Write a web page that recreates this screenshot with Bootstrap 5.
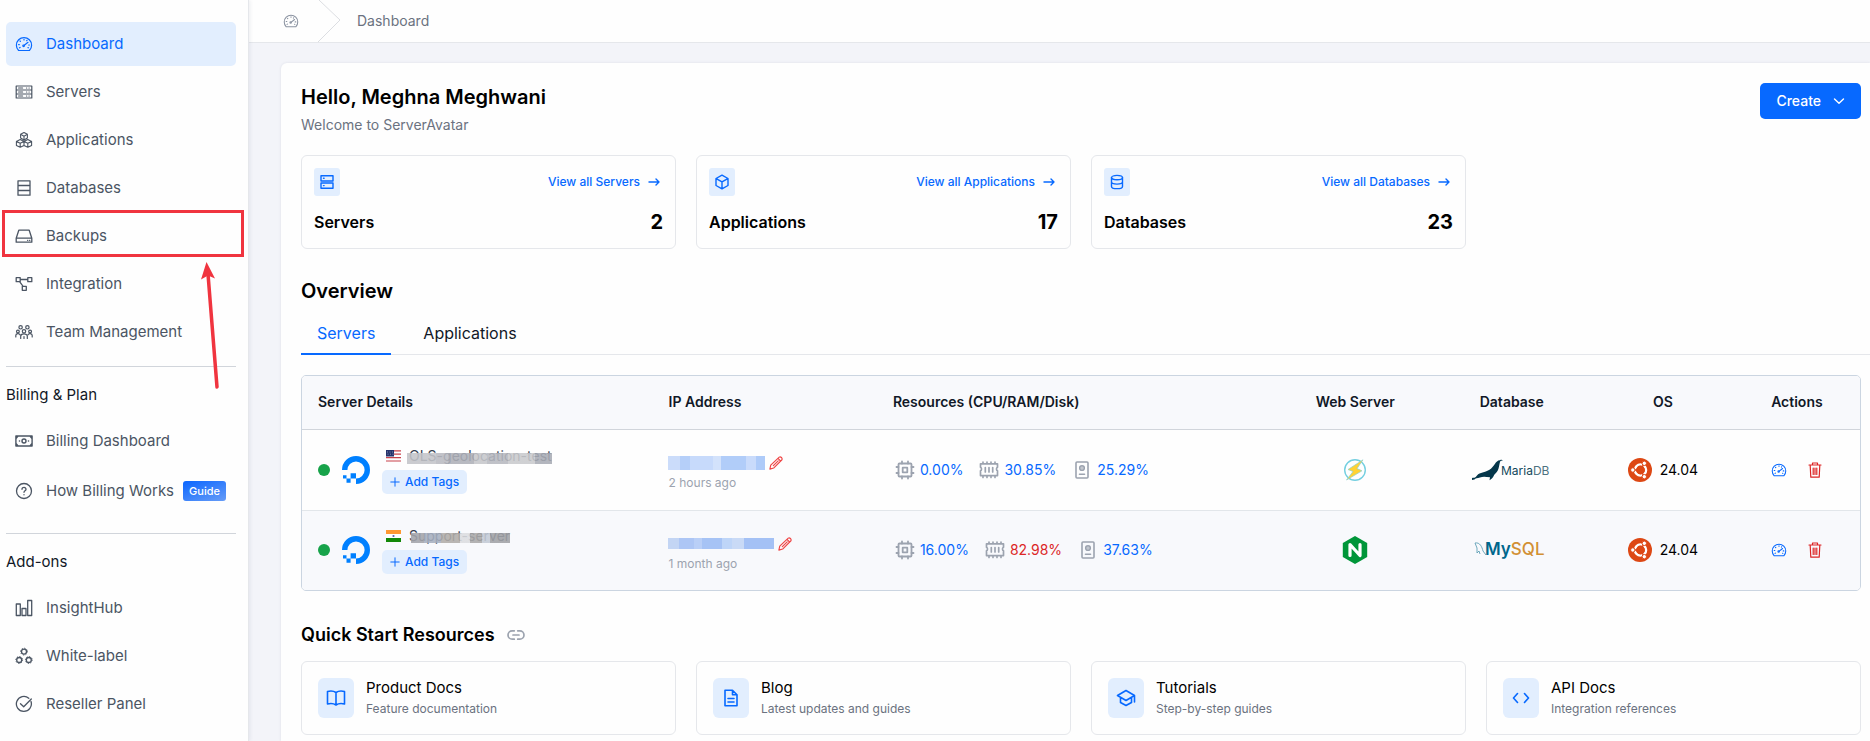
<!DOCTYPE html>
<html lang="en">
<head>
<meta charset="utf-8">
<meta name="viewport" content="width=device-width, initial-scale=1">
<title>ServerAvatar - Dashboard</title>
<link rel="stylesheet" href="https://cdn.jsdelivr.net/npm/bootstrap@5.3.0/dist/css/bootstrap.min.css">
<style>
:root{--sa-blue:#0769ff;--sa-tint:#e2eefe;--sa-line:#e5e7eb;--sa-slate:#4b5563;--sa-gray:#6b7280}
body{font-family:Inter,"Liberation Sans",sans-serif;font-size:14px;line-height:20px;color:#000;background:#f3f4f9}
a{text-decoration:none;color:var(--sa-blue)}
svg{display:block;flex:none}
.ln{fill:none;stroke:currentColor;stroke-linecap:round;stroke-linejoin:round}
.s14{width:14px;height:14px}
.s16{width:16px;height:16px}
.s18{width:18px;height:18px}
.s20{width:20px;height:20px}

.side{width:249px;flex:none;background:#fefefe;border-right:1px solid var(--sa-line);box-shadow:1px 0 4px rgba(30,40,80,.08);padding:22px 12px 0 6px;position:relative}
.side .nav-link{height:44px;margin-bottom:4px;padding:0 8px 0 9px;gap:13px;display:flex;align-items:center;color:var(--sa-slate);font-size:15px;border-radius:5px;white-space:nowrap}
.side .nav-link svg{width:18px;height:18px}
.side .nav-link.active{background:var(--sa-tint);color:var(--sa-blue)}
.side .nav-link.guide{height:48px}
.side hr{margin:8px 0 16px;border-color:#d1d5db;opacity:1}
.side hr.later{margin-top:14px}
.side h2{font-size:15px;line-height:24px;font-weight:400;margin:0 0 12px;color:#111827}
.guide-tag{font-size:11px;line-height:20px;font-weight:500;color:#fff;background:linear-gradient(160deg,#0b66ff,#669cf7);border-radius:3px;padding:0 6px;margin-left:-4px}
.callout-box{position:absolute;left:2px;top:210px;width:242px;height:47px;border:3px solid #f0343f;pointer-events:none}
.callout-arrow{position:absolute;left:200px;top:262px;pointer-events:none}

.crumbs{height:43px;background:#fefefe;border-bottom:1px solid var(--sa-line);color:var(--sa-gray);font-size:14px}
.crumbs a{color:#8b93a1;padding:0 18px 0 34px}
.crumbs .sep{width:24px;height:42px;margin-right:16px}

.panel{background:#fefefe;margin:20px 0 0 32px;padding:20px 9px 4px 20px;border-top-left-radius:6px;box-shadow:0 0 3px rgba(30,40,80,.1)}
h1,.h-over{font-size:20px;line-height:28px;font-weight:600;margin:0}
.muted{color:var(--sa-gray)}
.btn-create{background:var(--sa-blue);border:0;color:#fff;font-size:14px;font-weight:500;height:36px;padding:0 16px;border-radius:5px;display:flex;align-items:center;gap:12px}
.btn-create:hover{background:#055be0;color:#fff}
.tiles{display:grid;grid-template-columns:repeat(4,minmax(0,1fr));gap:20px}
.tile{border:1px solid var(--sa-line);border-radius:6px;background:#fefefe}
.stat{height:94px;padding:12px}
.stat .ico{width:26px;height:28px;border-radius:3px}
.ico{background:var(--sa-tint);color:var(--sa-blue);display:flex;align-items:center;justify-content:center;flex:none}
.stat .more{font-size:12px;font-weight:500;gap:8px;padding-right:3px}
.stat .name{font-size:16px;font-weight:600}
.stat .num{font-size:20px;font-weight:700}

.tabs{border-bottom:1px solid var(--sa-line);gap:16px;margin-right:-9px}
.tabs .nav-link{color:#111827;font-size:16px;font-weight:400;line-height:24px;padding:8px 16px 8px;border-bottom:2px solid transparent;margin-bottom:-1px}
.tabs .nav-link.active{color:var(--sa-blue);border-color:var(--sa-blue)}

.grid-wrap{border:1px solid #cbd5e1;border-radius:5px;overflow:hidden;margin:20px 0 26px}
.servers{width:100%;table-layout:fixed;border-collapse:collapse}
.servers th{height:53px;font-size:14px;font-weight:600;color:#111827;background:#f8f9fc;border-bottom:1px solid #d1d5db;padding:0 16px}
.servers td{height:81px;padding:0 16px}
.servers tbody tr+tr td{height:80px;background:#f8f9fc;border-top:1px solid #e2e6ea}
.servers .mid{text-align:center;padding:0}
.dot{width:12px;height:12px;border-radius:50%;background:#17a34a;flex:none}
.srv{color:#374151;position:relative;line-height:20px;font-size:14px;white-space:nowrap}
.veil{position:absolute;left:-2px;right:0;top:7px;height:11px}
.veil.one{background:linear-gradient(90deg,#c3c4c9 0 20%,#b9bac1 20% 28%,#aeb0b8 28% 46%,#c6c7cb 46% 55%,#b7b9c0 55% 70%,#c9cacd 70% 88%,#a9acb5 88%);opacity:.88}
.veil.two{left:2px;height:10px;background:linear-gradient(90deg,#a3a4aa 0 13%,#a6afbf 13% 30%,#b1ada9 30% 50%,#dcdde0 50% 60%,#aaa9a9 60% 72%,#c4cbd6 72% 80%,#a1a2a6 80%);opacity:.88}
.addtag{background:var(--sa-tint);color:var(--sa-blue);border:0;border-radius:5px;height:24px;font-size:12px;font-weight:500;padding:0 8px;display:flex;align-items:center;gap:5px}
.ipcell{padding-top:10px}
.ip{display:block;width:97px;height:14px;margin-left:-1px;background:linear-gradient(90deg,#cbdcfa 0 12%,#b5cff9 12% 23%,#c7dafb 23% 46%,#d3e2fb 46% 55%,#b1cdf9 55% 80%,#c9dbfb 80% 91%,#aecbf9 91%)}
.ip.second{width:106px;height:11px;background:linear-gradient(90deg,#c3d5f4 0 10%,#adc6f5 10% 25%,#b9cff7 25% 32%,#a6c3f5 32% 51%,#bed5f8 51% 60%,#c9daf6 60% 72%,#a4c1f5 72%)}
.iconbtn{background:none;border:0;padding:0;display:block}
.iconbtn.edit{color:#ef4444}
.iconbtn.open{color:var(--sa-blue)}
.ago{font-size:12px;color:#9ca3af;margin-top:3px}
.metrics{padding-left:2px}
.metric{gap:5px;color:var(--sa-blue)}
.metric svg{color:#9ca3af;width:20px;height:20px}
.os{font-size:14px;font-weight:400}
.red{color:#dc2626}
.h-quick{font-size:18px;line-height:28px;font-weight:600;margin:0}
.quick{height:74px;padding:0 16px;gap:12px;color:#000}
.quick .ico{width:36px;height:40px;border-radius:6px}
.quick .ttl{font-size:15px;line-height:22px}
.quick .sub{font-size:12px;line-height:20px;color:var(--sa-gray)}
</style>
</head>
<body>
<svg width="0" height="0" class="position-absolute" aria-hidden="true">
<symbol id="gauge" viewBox="0 0 18 18"><g class="ln" stroke-width="1.2"><path d="M3.600 15.500a7.600 7.600 0 1 1 10.800 0z"/><path d="M9.300 10.300l3.700-3M9 4.300v.6M5 6l.4.4M3.600 9.600h.7M13.700 10h.7M4.500 12.800l.6-.3M13 12.600l.4.2M12 5.300l-.3.4"/><circle cx="8.600" cy="10.800" r=".8"/></g></symbol>
<symbol id="rack" viewBox="0 0 18 18"><g class="ln" stroke-width="1.200"><path d="M1.200 3h15.600v12H1.200zM1.200 7h15.600M1.200 11h15.600M3.600 5h4M3.600 9h4M3.600 13h4M11.500 5h.2M14 5h.2M11.500 9h.2M14 9h.2M11.500 13h.2M14 13h.2"/></g></symbol>
<symbol id="cubes" viewBox="0 0 18 18"><g class="ln" stroke-width="1.1"><path d="M9 1.5l3.400 1.800v3.800L9 9 5.600 7.100V3.300zM5.600 3.300L9 5.200l3.400-1.900M9 5.200V9M5.200 8.500L9 10.400v4L5.200 16.300 1.400 14.400v-4zM1.400 10.400l3.800 1.900L9 10.400M5.200 12.300v4M12.800 8.500l3.800 1.900v4l-3.800 1.900L9 14.400M9 10.400l3.800-1.900M9 10.400l3.800 1.900 3.800-1.900M12.800 12.300v4"/></g></symbol>
<symbol id="shelf" viewBox="0 0 18 18"><path class="ln" stroke-width="1.3" d="M3 1.800h12v14.400H3zM3 6.500h12M3 11.500h12"/></symbol>
<symbol id="drive" viewBox="0 0 18 18"><path class="ln" stroke-width="1.3" d="M3.800 3.200h10.400l2.600 8v4H1.200v-4zM1.200 11.200h15.600M12.600 13.300h.2M14.600 13.300h.2"/></symbol>
<symbol id="flow" viewBox="0 0 18 18"><path class="ln" stroke-width="1.300" d="M1.200 2.700h4v4h-4zM12.800 2.700h4v4h-4zM7.300 11.300h4v4h-4zM5.200 4.500h7.600M4.600 6.700l3.500 4.600"/></symbol>
<symbol id="team" viewBox="0 0 18 18"><g class="ln" stroke-width="1.200"><circle cx="5.600" cy="4.300" r="1.700"/><circle cx="12.400" cy="4.300" r="1.700"/><circle cx="9" cy="8.300" r="1.700"/><circle cx="2.900" cy="8.500" r="1.400"/><circle cx="15.100" cy="8.500" r="1.400"/><path d="M.8 14v-1.500c0-2 3.400-2.600 4.200-.7M17.200 14v-1.500c0-2-3.400-2.600-4.200-.7M5.700 15.500v-2.300c0-3.200 6.600-3.200 6.600 0v2.300M9 13.500v2"/></g></symbol>
<symbol id="cash" viewBox="0 0 18 18"><g class="ln" stroke-width="1.400"><path d="M.9 4h16.200v10H.9zM4.400 9h.2M13.400 9h.2M1 6.500L3 4M15 4l2 2.500M1 11.500L3 14M17 11.500L15 14"/><circle cx="9" cy="9" r="2"/></g></symbol>
<symbol id="help" viewBox="0 0 18 18"><g class="ln" stroke-width="1.300"><circle cx="9" cy="9" r="7.500"/><path d="M7 7.300C7 4.700 11.200 4.800 11 7.400c-.1 1.400-2 1.400-2 2.900M9 12.600v.2"/></g></symbol>
<symbol id="bars" viewBox="0 0 18 18"><path class="ln" stroke-width="1.300" d="M1.300 5h4v11.500h-4zM7 9.500h4v7H7zM12.700 1.500h4v15h-4z"/></symbol>
<symbol id="rings" viewBox="0 0 18 18"><g class="ln" stroke-width="1.300"><circle cx="9" cy="4.600" r="2.500"/><circle cx="4.200" cy="13" r="2.500"/><circle cx="13.800" cy="13" r="2.500"/></g><g class="ln" stroke-width="1" stroke-dasharray=".5 2.200"><circle cx="9" cy="4.600" r="3.400"/><circle cx="4.200" cy="13" r="3.400"/><circle cx="13.800" cy="13" r="3.400"/></g></symbol>
<symbol id="okring" viewBox="0 0 18 18"><path class="ln" stroke-width="1.300" d="M16 6.500A7.500 7.500 0 1 1 13.800 3.200M5.500 8.700l3.200 3L16.300 4"/></symbol>
<symbol id="srv2" viewBox="0 0 16 16"><path class="ln" stroke-width="1.400" d="M2 1.700h12v5.300H2zM2 9h12v5.300H2zM4.500 4.300h.6M4.500 11.600h.6"/></symbol>
<symbol id="cube" viewBox="0 0 16 16"><path class="ln" stroke-width="1.400" d="M8 1.200l6 3.300v7L8 14.800l-6-3.300v-7zM2.200 4.600L8 7.800l5.800-3.200M8 7.800v7"/></symbol>
<symbol id="cyl" viewBox="0 0 16 16"><g class="ln" stroke-width="1.400"><ellipse cx="8" cy="3.600" rx="5.500" ry="2.200"/><path d="M2.500 3.600v8.800c0 3 11 3 11 0V3.600M2.500 8c0 2.800 11 2.800 11 0"/></g></symbol>
<symbol id="arrow" viewBox="0 0 12 12"><path class="ln" stroke-width="1.400" d="M1 6h10M8 3l3 3-3 3"/></symbol>
<symbol id="ocean" viewBox="0 0 28 28"><path fill="#0080ff" d="M14 28v-5.400a8.600 8.600 0 1 0-8.600-8.600H0A14 14 0 1 1 14 28z"/><path fill="#0080ff" d="M8.600 17.200H14v5.400H8.600zM4.500 22.600h4.100v4.100H4.500zM1 19.200h3.500v3.400H1z"/></symbol>
<symbol id="pencil" viewBox="0 0 16 16"><path class="ln" stroke-width="1.300" d="M1 15l1-4.500L11.700 1.300q1.300-.8 2.500.4t.6 2.600L5.300 13.800zM10.300 2.800l2.900 2.900M5 11l5.500-5.500"/></symbol>
<symbol id="cpu" viewBox="0 0 20 20"><g class="ln" stroke-width="1.800"><rect x="3.500" y="3.500" width="13" height="13" rx="1"/><rect x="7.700" y="7.700" width="4.600" height="4.600"/><path d="M7 3.500v-2M13 3.500v-2M7 18.500v-2M13 18.500v-2M3.500 7h-2M3.500 13h-2M18.500 7h-2M18.500 13h-2"/></g></symbol>
<symbol id="ram" viewBox="0 0 20 20"><path class="ln" stroke-width="1.700" d="M1.500 3.800h17v3.400q-1 .4-1 1.800t1 1.800v4.800h-17v-4.800q1-.4 1-1.800t-1-1.800zM6.300 7.500v4.500M10 7.500v4.500M13.700 7.500v4.500M4 3.500V2M8 3.500V2M12 3.500V2M16 3.500V2M4 17.500v-1.500M8 17.500v-1.500M12 17.500v-1.500M16 17.500v-1.500"/></symbol>
<symbol id="disk" viewBox="0 0 20 20"><g class="ln" stroke-width="1.600"><rect x="4" y="2" width="12" height="16" rx="1"/><circle cx="10" cy="8" r="2.300"/><path d="M7.500 14.300h5"/></g><circle cx="10" cy="8" r="1.800" fill="currentColor" opacity=".6"/></symbol>
<symbol id="trash" viewBox="0 0 16 16"><path class="ln" stroke-width="1.200" d="M2 3h12M5.500 2.800V1h5v1.800M3.200 3.200l.6 12h8.400l.6-12M6.200 6v6.500M8 6v6.500M9.800 6v6.500"/></symbol>
<symbol id="ubuntu" viewBox="0 0 24 24"><circle cx="12" cy="12" r="12" fill="#dd4814"/><circle cx="12.500" cy="12" r="5.600" fill="none" stroke="#fff" stroke-width="2.400"/><path stroke="#dd4814" stroke-width="1.400" d="M12.500 12H3M12.500 12l4.700 8.300M12.500 12l4.700-8.300"/><circle cx="12.500" cy="12" r="4.300" fill="#dd4814"/><g fill="#fff" stroke="#dd4814"><circle cx="4.800" cy="12" r="2.200"/><circle cx="16.300" cy="5.300" r="2.200"/><circle cx="16.300" cy="18.700" r="2.200"/></g></symbol>
</svg>

<div class="d-flex min-vh-100">
<aside class="side">
  <nav class="nav flex-column flex-nowrap" aria-label="Main">
    <a class="nav-link active" href="#"><svg><use href="#gauge"/></svg>Dashboard</a>
    <a class="nav-link" href="#"><svg><use href="#rack"/></svg>Servers</a>
    <a class="nav-link" href="#"><svg><use href="#cubes"/></svg>Applications</a>
    <a class="nav-link" href="#"><svg><use href="#shelf"/></svg>Databases</a>
    <a class="nav-link" href="#"><svg><use href="#drive"/></svg>Backups</a>
    <a class="nav-link" href="#"><svg><use href="#flow"/></svg>Integration</a>
    <a class="nav-link" href="#"><svg><use href="#team"/></svg>Team Management</a>
  </nav>
  <hr>
  <h2>Billing &amp; Plan</h2>
  <nav class="nav flex-column" aria-label="Billing">
    <a class="nav-link" href="#"><svg><use href="#cash"/></svg>Billing Dashboard</a>
    <a class="nav-link guide" href="#"><svg><use href="#help"/></svg>How Billing Works<span class="guide-tag">Guide</span></a>
  </nav>
  <hr class="later">
  <h2>Add-ons</h2>
  <nav class="nav flex-column" aria-label="Add-ons">
    <a class="nav-link" href="#"><svg><use href="#bars"/></svg>InsightHub</a>
    <a class="nav-link" href="#"><svg><use href="#rings"/></svg>White-label</a>
    <a class="nav-link mb-0" href="#"><svg><use href="#okring"/></svg>Reseller Panel</a>
  </nav>
  <div class="callout-box"></div>
  <svg class="callout-arrow" width="24" height="130" viewBox="0 0 24 130"><path d="M17 125L8 12" stroke="#f0343f" stroke-width="3.500" stroke-linecap="round"/><path d="M6.500 0L15 16.500 8 13.500 1 17.500z" fill="#f0343f"/></svg>
</aside>

<div class="flex-grow-1 d-flex flex-column overflow-hidden">
  <nav class="crumbs d-flex align-items-center" aria-label="Breadcrumb">
    <a href="#" aria-label="Home"><svg class="s16"><use href="#gauge"/></svg></a>
    <svg class="sep" viewBox="0 0 24 42"><path d="M2 0l21 20L1 42" fill="none" stroke="#dcdee2"/></svg>
    <span>Dashboard</span>
  </nav>

  <main class="panel flex-grow-1">
    <div class="d-flex justify-content-between align-items-start">
      <div>
        <h1>Hello, Meghna Meghwani</h1>
        <div class="muted mt-1">Welcome to ServerAvatar</div>
      </div>
      <button class="btn-create" type="button">Create <svg width="12" height="12" viewBox="0 0 12 12"><path class="ln" stroke-width="1.400" d="M1.500 4L6 8.300 10.500 4"/></svg></button>
    </div>

    <div class="tiles mt-3 pt-1">
      <div class="tile stat d-flex flex-column justify-content-between">
        <div class="d-flex justify-content-between align-items-center"><span class="ico"><svg class="s16"><use href="#srv2"/></svg></span><a class="more d-flex align-items-center" href="#">View all Servers <svg width="12" height="12"><use href="#arrow"/></svg></a></div>
        <div class="d-flex justify-content-between align-items-center pb-1"><span class="name">Servers</span><span class="num">2</span></div>
      </div>
      <div class="tile stat d-flex flex-column justify-content-between">
        <div class="d-flex justify-content-between align-items-center"><span class="ico"><svg class="s16"><use href="#cube"/></svg></span><a class="more d-flex align-items-center" href="#">View all Applications <svg width="12" height="12"><use href="#arrow"/></svg></a></div>
        <div class="d-flex justify-content-between align-items-center pb-1"><span class="name">Applications</span><span class="num">17</span></div>
      </div>
      <div class="tile stat d-flex flex-column justify-content-between">
        <div class="d-flex justify-content-between align-items-center"><span class="ico"><svg class="s16"><use href="#cyl"/></svg></span><a class="more d-flex align-items-center" href="#">View all Databases <svg width="12" height="12"><use href="#arrow"/></svg></a></div>
        <div class="d-flex justify-content-between align-items-center pb-1"><span class="name">Databases</span><span class="num">23</span></div>
      </div>
    </div>

    <h2 class="h-over mt-4 pt-1">Overview</h2>
    <nav class="nav tabs mt-1 pt-1" aria-label="Overview">
      <a class="nav-link active" href="#">Servers</a>
      <a class="nav-link" href="#">Applications</a>
    </nav>

    <div class="grid-wrap">
      <table class="servers">
        <colgroup><col style="width:22.5%"><col style="width:14.4%"><col style="width:25.8%"><col style="width:9.8%"><col style="width:10.3%"><col style="width:9.1%"><col style="width:8.1%"></colgroup>
        <thead><tr><th>Server Details</th><th>IP Address</th><th>Resources (CPU/RAM/Disk)</th><th class="mid">Web Server</th><th class="mid">Database</th><th class="mid">OS</th><th class="mid">Actions</th></tr></thead>
        <tbody>
        <tr>
          <td><div class="d-flex align-items-center gap-2">
            <span class="dot me-1"></span>
            <svg width="28" height="28" class="me-1"><use href="#ocean"/></svg>
            <div>
              <div class="d-flex align-items-center mb-1 ms-1 gap-2">
                <svg width="15" height="12" viewBox="0 0 15 12"><path fill="#fff" d="M0 0h15v12H0z"/><path stroke="#c8414b" stroke-width="1.200" d="M0 .8h15M0 4.200h15M0 7.600h15M0 11h15"/><path fill="#26336b" d="M0 0h8v6.500H0z"/><path stroke="#a9b2d0" stroke-dasharray="1 1.500" stroke-width=".7" d="M1 2h6M1.500 4.200h6"/></svg>
                <span class="srv">OLS-geolocation-test<span class="veil one"></span></span>
              </div>
              <button class="addtag" type="button"><svg width="10" height="10" viewBox="0 0 10 10"><path class="ln" d="M5 .8v8.400M.8 5h8.400"/></svg>Add Tags</button>
            </div></div></td>
          <td><div class="ipcell"><div class="d-flex align-items-center gap-1"><span class="ip"></span><button class="iconbtn edit" type="button" aria-label="Edit IP"><svg class="s14"><use href="#pencil"/></svg></button></div><div class="ago">2 hours ago</div></div></td>
          <td><div class="metrics d-flex gap-3"><span class="metric d-flex"><svg><use href="#cpu"/></svg>0.00%</span><span class="metric d-flex"><svg><use href="#ram"/></svg>30.85%</span><span class="metric d-flex"><svg><use href="#disk"/></svg>25.29%</span></div></td>
          <td class="mid"><svg width="24" height="24" viewBox="0 0 24 24" class="mx-auto"><circle cx="12" cy="12" r="10.300" fill="none" stroke="#73cfe0" stroke-width="1.400"/><path fill="#ffd234" stroke="#8ad0cf" stroke-width=".7" d="M20 1.800L5 11.500l5 2L3.500 22 19 12.800l-5-2.200z"/></svg></td>
          <td class="mid"><svg width="84" height="24" viewBox="0 0 84 24" class="mx-auto" role="img"><path fill="#04364a" d="M2 20c3-.5 3 .2 5-2.500 3-3.500 8-3 12-5.500C25 8.500 25 2.500 30 2.200c1-.6 2-.6 3 .1l-2.500.8c-.8 1.200-1 3.500-1.500 5.500-.6 3-1.500 5.500-4.500 8-1 1.500-1.500 3.800-5 5.600l.5-3c-4-.3-7-1-10 .3-2.500.8-5 .6-5.500 2L2 22z"/><text x="31" y="17" fill="#12485b" font-family="Inter" font-size="12">Maria<tspan fill="#4d7280">DB</tspan></text></svg></td>
          <td class="mid"><div class="d-flex justify-content-center align-items-center gap-2 os"><svg width="24" height="24"><use href="#ubuntu"/></svg>24.04</div></td>
          <td class="mid"><div class="d-flex justify-content-center gap-3"><button class="iconbtn open me-1" type="button" aria-label="Server dashboard"><svg class="s16"><use href="#gauge"/></svg></button><button class="iconbtn red" type="button" aria-label="Delete server"><svg class="s16"><use href="#trash"/></svg></button></div></td>
        </tr>
        <tr>
          <td><div class="d-flex align-items-center gap-2">
            <span class="dot me-1"></span>
            <svg width="28" height="28" class="me-1"><use href="#ocean"/></svg>
            <div>
              <div class="d-flex align-items-center mb-1 ms-1 gap-2">
                <svg width="15" height="12" viewBox="0 0 15 12"><path fill="#fff" d="M0 0h15v12H0z"/><path fill="#ff9933" d="M0 0h15v4H0z"/><path fill="#138808" d="M0 8h15v4H0z"/><circle cx="7.500" cy="6" r="1.100" fill="#5a62a8"/></svg>
                <span class="srv">Support-server<span class="veil two"></span></span>
              </div>
              <button class="addtag" type="button"><svg width="10" height="10" viewBox="0 0 10 10"><path class="ln" d="M5 .8v8.400M.8 5h8.400"/></svg>Add Tags</button>
            </div></div></td>
          <td><div class="ipcell"><div class="d-flex align-items-center gap-1"><span class="ip second"></span><button class="iconbtn edit" type="button" aria-label="Edit IP"><svg class="s14"><use href="#pencil"/></svg></button></div><div class="ago">1 month ago</div></div></td>
          <td><div class="metrics d-flex gap-3"><span class="metric d-flex"><svg><use href="#cpu"/></svg>16.00%</span><span class="metric d-flex red"><svg><use href="#ram"/></svg>82.98%</span><span class="metric d-flex"><svg><use href="#disk"/></svg>37.63%</span></div></td>
          <td class="mid"><svg width="26" height="28" viewBox="0 0 26 28" class="mx-auto"><path fill="#009639" d="M13 0l12.200 7v14L13 28 .8 21V7z"/><path fill="none" stroke="#fff" stroke-width="3.200" stroke-linecap="round" stroke-linejoin="round" d="M8 19.500v-11l10 11v-11"/></svg></td>
          <td class="mid"><svg width="78" height="24" viewBox="0 0 78 24" class="mx-auto" role="img"><path fill="none" stroke="#5f9fb5" stroke-width=".9" d="M2 5c5-1 7 4 8 8l3 4M2 5l2 5v5l2-2 1 3"/><text x="12" y="17" font-family="Inter" font-size="17" font-weight="600" fill="#00678c">My<tspan font-weight="500" fill="#d29034">SQL</tspan></text></svg></td>
          <td class="mid"><div class="d-flex justify-content-center align-items-center gap-2 os"><svg width="24" height="24"><use href="#ubuntu"/></svg>24.04</div></td>
          <td class="mid"><div class="d-flex justify-content-center gap-3"><button class="iconbtn open me-1" type="button" aria-label="Server dashboard"><svg class="s16"><use href="#gauge"/></svg></button><button class="iconbtn red" type="button" aria-label="Delete server"><svg class="s16"><use href="#trash"/></svg></button></div></td>
        </tr>
        </tbody>
      </table>
    </div>

    <div class="d-flex align-items-center gap-2 mb-2 pb-1 pt-1">
      <h2 class="h-quick me-1">Quick Start Resources</h2>
      <svg width="18" height="18" viewBox="0 0 18 18" color="#9ca3af"><path class="ln" stroke-width="1.700" d="M7.300 4.800H5.200a4.200 4.200 0 0 0 0 8.400h2.100M10.700 4.800h2.100a4.200 4.200 0 0 1 0 8.400h-2.100M6 9h6"/></svg>
    </div>
    <div class="tiles mt-1">
      <a class="tile quick d-flex align-items-center" href="#"><span class="ico"><svg class="s20" viewBox="0 0 20 20"><path class="ln" stroke-width="1.600" d="M10 4.500C7.500 2.800 4.500 2.800 1.500 3.500v12.500c3-.7 6-.7 8.500 1 2.500-1.700 5.500-1.700 8.500-1V3.500c-3-.7-6-.7-8.500 1zM10 4.500V17"/></svg></span><span><span class="ttl d-block">Product Docs</span><span class="sub d-block">Feature documentation</span></span></a>
      <a class="tile quick d-flex align-items-center" href="#"><span class="ico"><svg class="s18" viewBox="0 0 18 18"><path class="ln" stroke-width="1.600" d="M3 1.300h7.500L15 5.800v11H3zM10.500 1.500v4.300H15M6 9.500h6M6 13h6"/></svg></span><span><span class="ttl d-block">Blog</span><span class="sub d-block">Latest updates and guides</span></span></a>
      <a class="tile quick d-flex align-items-center" href="#"><span class="ico"><svg class="s20" viewBox="0 0 20 20"><path class="ln" stroke-width="1.600" d="M10 2.500L1.500 7.500 10 12.500l8.500-5zM4.500 9.500v5L10 17.500l5.500-3v-5M18.500 7.500V14"/></svg></span><span><span class="ttl d-block">Tutorials</span><span class="sub d-block">Step-by-step guides</span></span></a>
      <a class="tile quick d-flex align-items-center" href="#"><span class="ico"><svg class="s18" viewBox="0 0 18 18"><path class="ln" stroke-width="1.600" d="M5.500 4.500L1.500 9l4 4.500M12.500 4.500l4 4.500-4 4.500"/></svg></span><span><span class="ttl d-block">API Docs</span><span class="sub d-block">Integration references</span></span></a>
    </div>
  </main>
</div>
</div>
<script src="https://cdn.jsdelivr.net/npm/bootstrap@5.3.0/dist/js/bootstrap.bundle.min.js"></script>
</body>
</html>
